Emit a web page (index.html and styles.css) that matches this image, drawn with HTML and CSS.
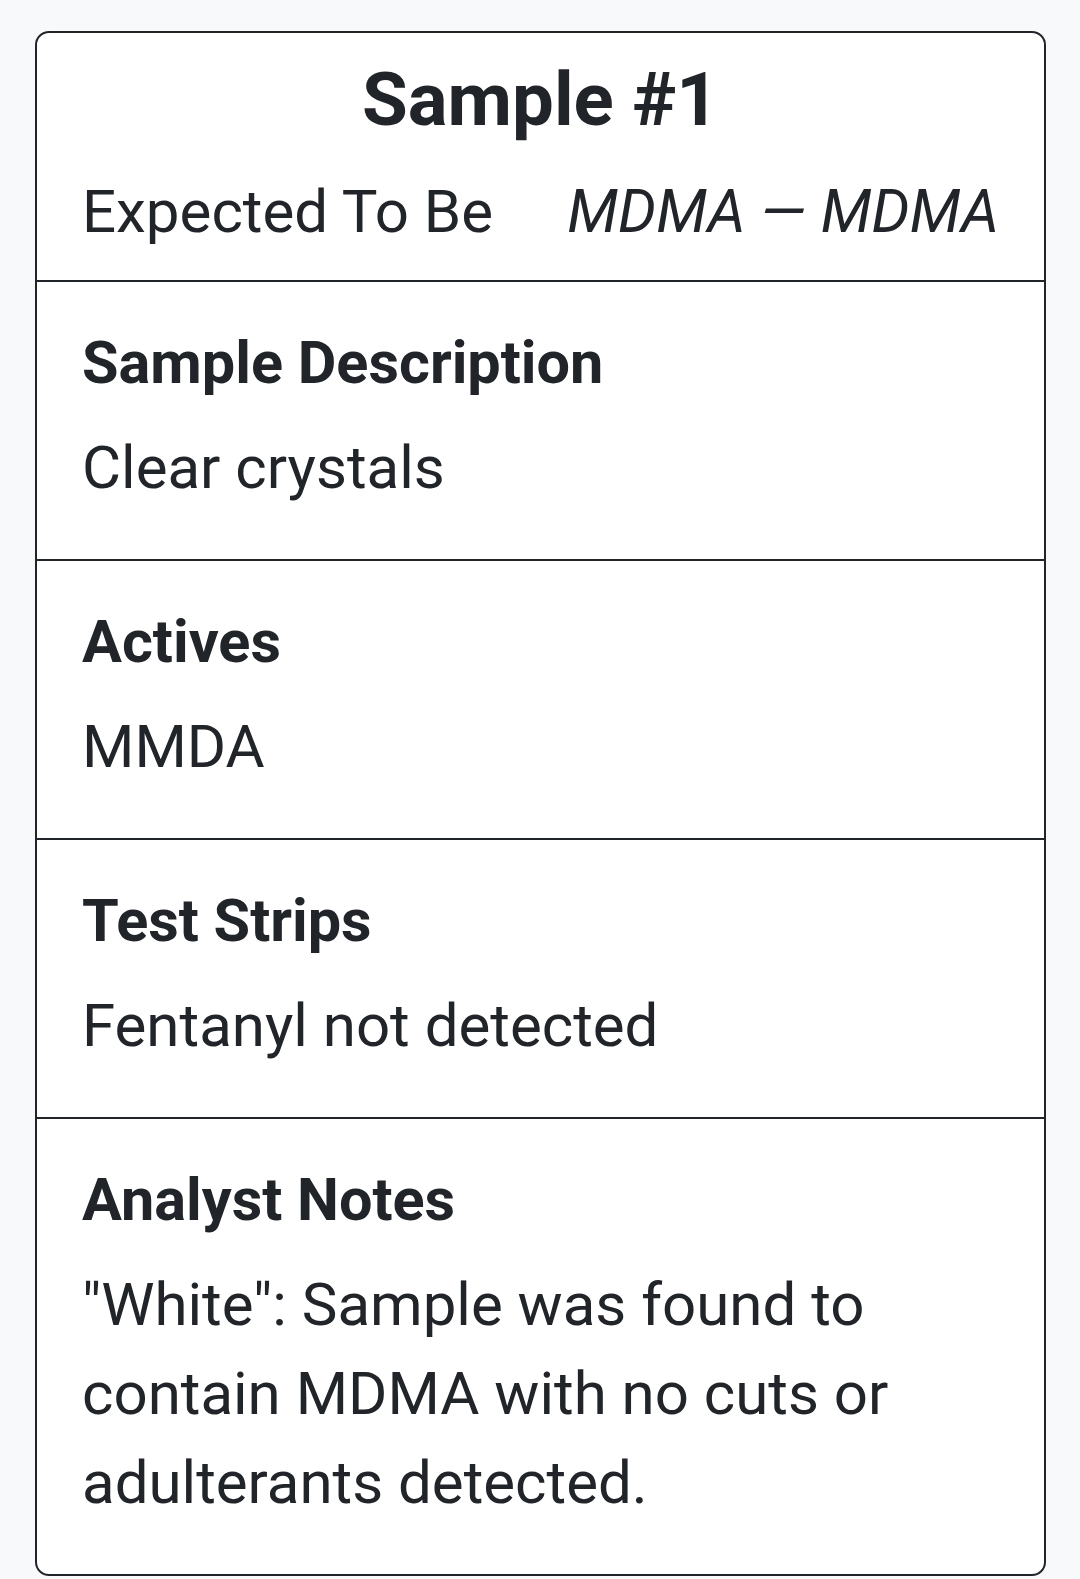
FILE: index.html
```html
<!DOCTYPE html>
<html lang="en">
<head>
<meta charset="utf-8">
<title>Sample #1</title>
<link rel="stylesheet" href="styles.css">
</head>
<body>
  <div class="card">
    <div class="card-header">
      <h1 class="title">Sample #1</h1>
      <div class="expected">
        <span class="expected-label">Expected To Be</span>
        <span class="expected-value">MDMA — MDMA</span>
      </div>
    </div>
    <div class="section">
      <h2 class="section-title">Sample Description</h2>
      <p class="section-text">Clear crystals</p>
    </div>
    <div class="section">
      <h2 class="section-title">Actives</h2>
      <p class="section-text">MMDA</p>
    </div>
    <div class="section">
      <h2 class="section-title">Test Strips</h2>
      <p class="section-text">Fentanyl not detected</p>
    </div>
    <div class="section">
      <h2 class="section-title">Analyst Notes</h2>
      <p class="section-text">"White": Sample was found to contain MDMA with no cuts or adulterants detected.</p>
    </div>
  </div>
</body>
</html>
```

FILE: styles.css
```css
html, body {
  margin: 0;
  padding: 0;
  background: #f8f9fa;
}

body {
  font-family: Roboto, "Liberation Sans", sans-serif;
  color: #212529;
  padding: 31px 0 4px 35px;
}

.card {
  width: 1011px;
  box-sizing: border-box;
  background: #ffffff;
  border: 2px solid #212529;
  border-radius: 14px;
  overflow: hidden;
}

.card-header {
  padding: 22px 45px 24px 45px;
}

.title {
  margin: 0 0 22px 0;
  text-align: center;
  font-size: 74.4px;
  font-weight: 700;
  line-height: 90px;
}

.expected {
  display: flex;
  justify-content: space-between;
  align-items: baseline;
  font-size: 60px;
  line-height: 89px;
}

.expected-value {
  font-style: italic;
}

.section {
  border-top: 2px solid #212529;
  padding: 45px 45px 47px 45px;
}

.section-title {
  margin: 0 0 24px 0;
  font-size: 59.4px;
  font-weight: 700;
  line-height: 72px;
}

.section-text {
  margin: 0;
  font-size: 60px;
  line-height: 89px;
}
```
